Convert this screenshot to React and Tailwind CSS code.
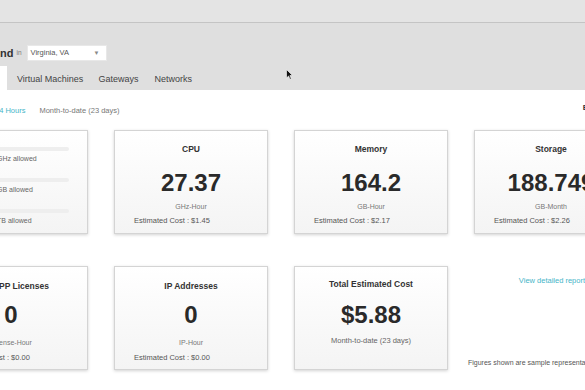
import React from 'react';

function Card({ className = '', children }) {
    return (
        <div
            className={`w-[154px] h-[104px] shrink-0 flex flex-col border border-[#d4d4d4] bg-gradient-to-b from-white to-[#f4f4f4] shadow-[0_1px_3px_rgba(0,0,0,0.18)] ${className}`}
        >
            {children}
        </div>
    );
}

function LimitRow({ label, first }) {
    return (
        <div className={first ? '' : 'mt-[14px]'}>
            <div className="h-[4px] bg-[#eeeeee] rounded-sm" />
            <div className="mt-[3px] text-[7px] leading-[10px] text-[#666] whitespace-nowrap">{label}</div>
        </div>
    );
}

function MetricCard({ title, value, unit, cost }) {
    return (
        <Card className="items-center pt-[13px]">
            <div className="text-[8.5px] leading-[10px] font-bold text-[#333]">{title}</div>
            <div className="mt-[17px] text-[24px] leading-[24px] font-bold text-[#2a2a2a]">{value}</div>
            <div className="mt-[7px] text-[7px] leading-[10px] text-[#777]">{unit}</div>
            <div className="mt-[4px] self-start pl-[19px] text-[7.5px] leading-[10px] text-[#555] whitespace-nowrap">
                Estimated Cost : {cost}
            </div>
        </Card>
    );
}

function SmallMetricCard({ title, value, unit, cost }) {
    return (
        <Card className="items-center pt-[14px]">
            <div className="text-[8.5px] leading-[10px] font-bold text-[#333] whitespace-nowrap">{title}</div>
            <div className="mt-[12px] text-[24px] leading-[24px] font-bold text-[#2a2a2a]">{value}</div>
            <div className="mt-[11px] text-[7px] leading-[10px] text-[#777]">{unit}</div>
            <div className="mt-[5px] self-start pl-[19px] text-[7.5px] leading-[10px] text-[#555] whitespace-nowrap">
                Estimated Cost : {cost}
            </div>
        </Card>
    );
}

export default function App() {
    return (
        <div className="relative w-[585px] h-[390px] overflow-hidden bg-white font-['Liberation_Sans',Arial,sans-serif]">
            {/* header */}
            <div className="bg-[#dfdfdf]">
                <div className="h-[23px] bg-[#e4e4e4] border-b border-[#c4c4c4]" />
                <div className="flex items-center h-[43px] pt-[22px] pb-[5px]">
                    <span className="text-[11px] leading-[16px] font-bold text-[#333]">nd</span>
                    <span className="ml-[3px] text-[6.5px] text-[#777]">in</span>
                    <div className="ml-[5px] w-[80px] h-[16px] bg-white border border-[#e8e8e8] flex items-center justify-between pl-[3px] pr-[6px]">
                        <span className="text-[7.5px] text-[#555]">Virginia, VA</span>
                        <span className="text-[6px] text-[#888]">▼</span>
                    </div>
                </div>
                <div className="flex h-[24px] items-stretch text-[9px] text-[#444]">
                    <div className="w-[7px] bg-white" />
                    <div className="ml-[10px] pt-[3px] flex items-center">Virtual Machines</div>
                    <div className="ml-[15px] pt-[3px] flex items-center">Gateways</div>
                    <div className="ml-[16px] pt-[3px] flex items-center">Networks</div>
                </div>
            </div>

            {/* period selector */}
            <div className="flex items-center pt-[16px] h-[26px] text-[7.5px] leading-[10px]">
                <span className="ml-[-5px] text-[#45b5c8]">24 Hours</span>
                <span className="ml-[14px] text-[#777]">Month-to-date (23 days)</span>
                <span className="ml-auto mr-[-3px] mt-[-6px] text-[8px] font-bold text-[#333]">E</span>
            </div>

            {/* row 1 */}
            <div className="mt-[14px] ml-[-66px] flex gap-[26px]">
                <Card className="pt-[16px] pl-[62px] pr-[18px]">
                    <LimitRow first label="GHz allowed" />
                    <LimitRow label="GB allowed" />
                    <LimitRow label="TB allowed" />
                </Card>
                <MetricCard title="CPU" value="27.37" unit="GHz-Hour" cost="$1.45" />
                <MetricCard title="Memory" value="164.2" unit="GB-Hour" cost="$2.17" />
                <MetricCard title="Storage" value="188.749" unit="GB-Month" cost="$2.26" />
            </div>

            {/* row 2 */}
            <div className="mt-[32px] ml-[-66px] flex gap-[26px]">
                <SmallMetricCard title="OS VSPP Licenses" value="0" unit="License-Hour" cost="$0.00" />
                <SmallMetricCard title="IP Addresses" value="0" unit="IP-Hour" cost="$0.00" />
                <Card className="items-center pt-[12px]">
                    <div className="text-[8.5px] leading-[10px] font-bold text-[#333]">Total Estimated Cost</div>
                    <div className="mt-[14px] text-[24px] leading-[24px] font-bold text-[#2a2a2a]">$5.88</div>
                    <div className="mt-[9px] text-[7.5px] leading-[10px] text-[#666]">Month-to-date (23 days)</div>
                </Card>
                <div className="w-[111px] shrink-0 flex flex-col h-[104px] pb-[2px]">
                    <div className="mt-[10px] text-right text-[7.5px] leading-[10px] text-[#45b5c8] whitespace-nowrap">
                        View detailed report
                    </div>
                    <div className="mt-auto ml-[-6px] text-[7px] leading-[10px] text-[#555] whitespace-nowrap">
                        Figures shown are sample representative values
                    </div>
                </div>
            </div>

            {/* mouse cursor */}
            <svg className="absolute left-[286px] top-[69px] w-[7px] h-[11px]" viewBox="0 0 7 11">
                <path d="M0.5 0.5 L0.5 9 L2.6 7 L4 10.3 L5.3 9.7 L3.9 6.5 L6.5 6.5 Z" fill="#111" stroke="#fff" strokeWidth="0.6" />
            </svg>
        </div>
    );
}
